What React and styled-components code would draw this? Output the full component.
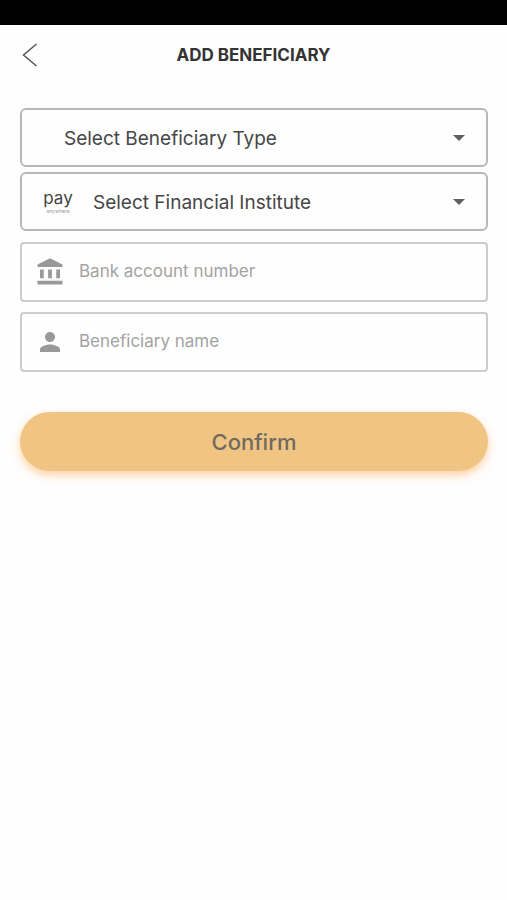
import React, { useState } from 'react';
import styled, { createGlobalStyle } from 'styled-components';
import { MdAccountBalance, MdPerson } from 'react-icons/md';

const theme = {
  font: 'Inter, Roboto, sans-serif',
  text: '#464646',
  title: '#333333',
  muted: '#999999',
  border: '#b8b8b8',
  borderLight: '#cccccc',
  accent: '#f0c583'
};

const GlobalStyle = createGlobalStyle`
  * {
    box-sizing: border-box;
  }

  body {
    margin: 0;
    background: #fefefe;
    font-family: ${theme.font};
  }
`;

const StatusBar = styled.div`
  height: 25px;
  background: #000;
`;

const Header = styled.header`
  display: grid;
  grid-template-columns: 40px 1fr 40px;
  align-items: center;
  height: 60px;
  padding: 0 10px;
`;

const BackButton = styled.button`
  display: flex;
  align-items: center;
  justify-content: center;
  height: 40px;
  padding: 0;
  border: none;
  background: none;
  color: #555;
`;

const Title = styled.h1`
  margin: 0;
  text-align: center;
  font-size: 17px;
  line-height: 24px;
  font-weight: 700;
  color: ${theme.title};
`;

const Form = styled.form`
  display: flex;
  flex-direction: column;
  padding: 23px 19px 32px 20px;
`;

const FieldGroup = styled.div`
  display: flex;
  flex-direction: column;
  gap: ${(props) => props.$gap};
  margin-bottom: ${(props) => props.$space};
`;

const SelectBox = styled.label`
  display: flex;
  position: relative;
  align-items: center;
  height: 59px;
  border: 2px solid ${theme.border};
  border-radius: 6px;
`;

const Select = styled.select`
  width: 100%;
  height: 100%;
  padding: 2px 48px 0 ${(props) => (props.$withLogo ? '71px' : '42px')};
  border: none;
  outline: none;
  appearance: none;
  background: transparent;
  font-family: inherit;
  font-size: 19px;
  color: ${theme.text};
`;

const Caret = styled.svg`
  position: absolute;
  right: 20px;
  pointer-events: none;
`;

const Logo = styled.span`
  display: flex;
  flex-direction: column;
  align-items: center;
  position: absolute;
  left: 21px;
  width: 30px;
  pointer-events: none;
  color: #444;
`;

const LogoName = styled.span`
  font-size: 17px;
  line-height: 18px;
`;

const LogoTag = styled.span`
  font-size: 5px;
  line-height: 8px;
  color: #999;
`;

const InputBox = styled.label`
  display: flex;
  align-items: center;
  gap: 14px;
  height: 60px;
  padding: 0 13px;
  border: 2px solid ${theme.borderLight};
  border-radius: 4px;
  color: ${theme.muted};
`;

const Input = styled.input`
  flex: 1;
  min-width: 0;
  height: 100%;
  padding: 0 0 2px;
  border: none;
  outline: none;
  background: transparent;
  font-family: inherit;
  font-size: 17px;
  color: ${theme.text};

  &::placeholder {
    color: #a3a3a3;
    opacity: 1;
  }
`;

const ConfirmButton = styled.button`
  height: 59px;
  border: none;
  border-radius: 30px;
  background: ${theme.accent};
  box-shadow: 0 4px 8px rgba(255, 165, 70, 0.5);
  font-family: inherit;
  font-size: 22px;
  font-weight: 500;
  color: #706a60;
`;

const DropdownArrow = () => (
  <Caret width="14" height="8" viewBox="0 0 14 8" aria-hidden="true">
    <path d="M1 1h12L7 7z" fill="#606060" />
  </Caret>
);

const App = () => {
  const [formData, setFormData] = useState({
    type: '',
    institute: '',
    account: '',
    name: ''
  });

  const handleChange = (e) => {
    setFormData({
      ...formData,
      [e.target.name]: e.target.value
    });
  };

  const handleSubmit = (e) => {
    e.preventDefault();
  };

  return (
    <>
      <GlobalStyle />
      <StatusBar />
      <Header>
        <BackButton type="button" aria-label="Back">
          <svg width="16" height="26" viewBox="0 0 16 26" fill="none" stroke="currentColor" strokeWidth="1.5">
            <path d="M14.5 2L1.5 13l13 11" />
          </svg>
        </BackButton>
        <Title>ADD BENEFICIARY</Title>
      </Header>
      <Form onSubmit={handleSubmit}>
        <FieldGroup $gap="5px" $space="11px">
          <SelectBox>
            <Select
              name="type"
              aria-label="Beneficiary type"
              value={formData.type}
              onChange={handleChange}
            >
              <option value="">Select Beneficiary Type</option>
            </Select>
            <DropdownArrow />
          </SelectBox>
          <SelectBox>
            <Logo>
              <LogoName>pay</LogoName>
              <LogoTag>anywhere</LogoTag>
            </Logo>
            <Select
              name="institute"
              aria-label="Financial institute"
              value={formData.institute}
              onChange={handleChange}
              $withLogo
            >
              <option value="">Select Financial Institute</option>
            </Select>
            <DropdownArrow />
          </SelectBox>
        </FieldGroup>
        <FieldGroup $gap="10px" $space="40px">
          <InputBox>
            <MdAccountBalance size={30} aria-hidden="true" />
            <Input
              type="text"
              name="account"
              aria-label="Bank account number"
              placeholder="Bank account number"
              value={formData.account}
              onChange={handleChange}
            />
          </InputBox>
          <InputBox>
            <MdPerson size={30} aria-hidden="true" />
            <Input
              type="text"
              name="name"
              aria-label="Beneficiary name"
              placeholder="Beneficiary name"
              value={formData.name}
              onChange={handleChange}
            />
          </InputBox>
        </FieldGroup>
        <ConfirmButton type="submit">Confirm</ConfirmButton>
      </Form>
    </>
  );
};

export default App;
